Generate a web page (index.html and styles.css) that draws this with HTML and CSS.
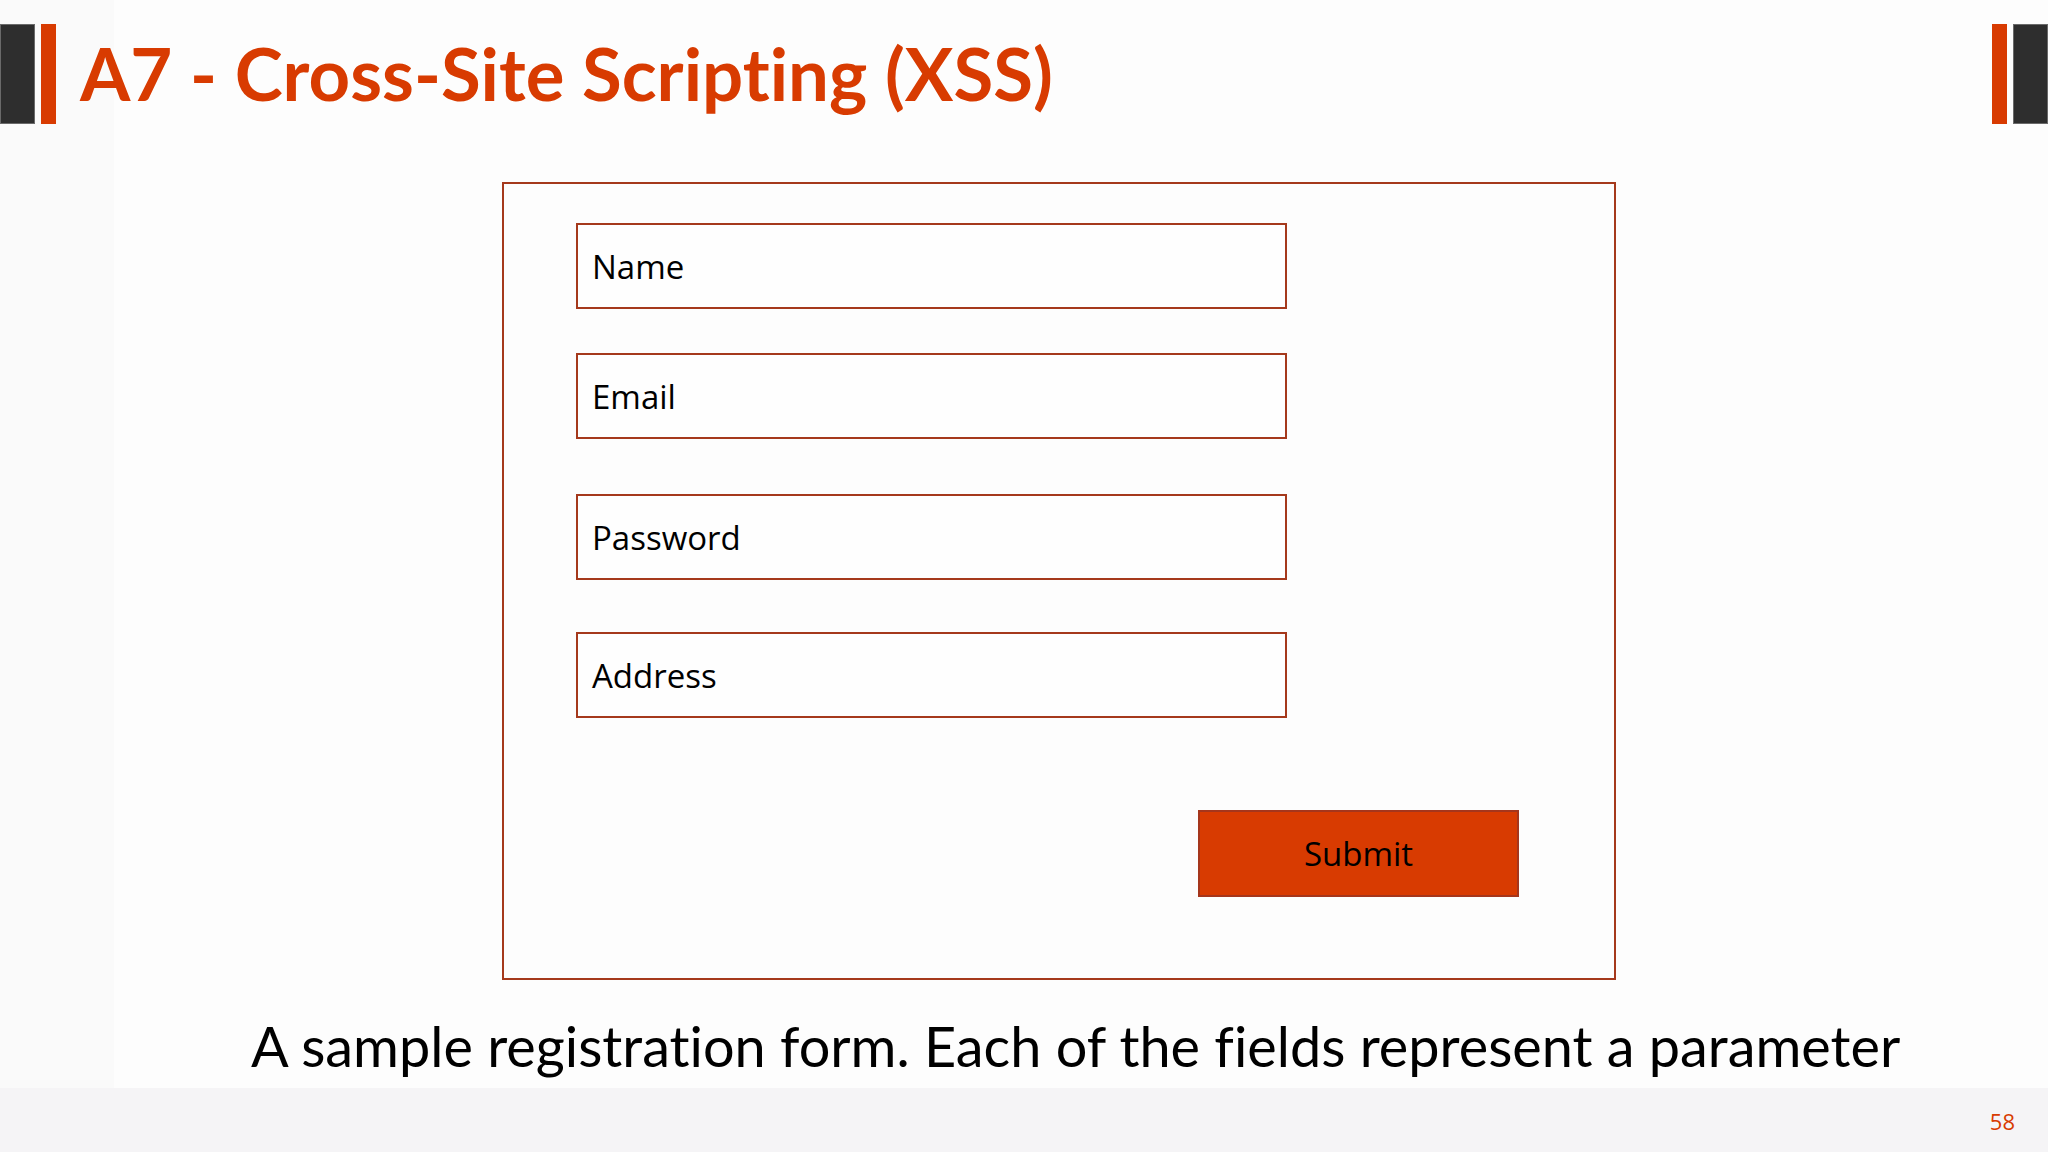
FILE: index.html
```html
<!DOCTYPE html>
<html lang="en">
<head>
<meta charset="utf-8">
<title>A7 - Cross-Site Scripting (XSS)</title>
<link rel="stylesheet" href="styles.css">
</head>
<body>
<div class="slide">
  <header class="head">
    <div class="bars">
      <span class="bar-dark"></span>
      <span class="bar-orange"></span>
    </div>
    <h1 class="title">A7 - Cross-Site Scripting (XSS)</h1>
    <div class="bars bars-right">
      <span class="bar-orange"></span>
      <span class="bar-dark"></span>
    </div>
  </header>

  <main class="content">
    <div class="form-box">
      <div class="field f1">Name</div>
      <div class="field f2">Email</div>
      <div class="field f3">Password</div>
      <div class="field f4">Address</div>
      <div class="submit">Submit</div>
    </div>
  </main>

  <p class="caption">A sample registration form. Each of the fields represent a parameter</p>

  <footer class="foot">
    <span class="page-num">58</span>
  </footer>
</div>
</body>
</html>
```

FILE: styles.css
```css
* { box-sizing: border-box; }

html, body {
  margin: 0;
  padding: 0;
}

body {
  width: 2048px;
  height: 1152px;
  background: #fdfdfd;
  font-family: "Open Sans", "Noto Sans", "Liberation Sans", sans-serif;
  color: #000;
  overflow: hidden;
}

.slide {
  width: 2048px;
  height: 1152px;
  display: flex;
  flex-direction: column;
  background: linear-gradient(to right, #fafafa 0, #fafafa 114px, #fdfdfd 114px);
}

/* header */
.head {
  height: 124px;
  padding-top: 24px;
  display: flex;
  align-items: flex-start;
}

.bars {
  display: flex;
  gap: 6px;
  flex: none;
}

.bars-right {
  margin-left: auto;
}

.bar-dark {
  display: block;
  width: 35px;
  height: 100px;
  background: #2e2e2e;
  box-shadow: 0 0 0 1px #6a6a6a inset;
}

.bar-orange {
  display: block;
  width: 15px;
  height: 100px;
  background: #d83b01;
}

.title {
  margin: 13px 0 0 24px;
  font-family: Lato, "Open Sans", sans-serif;
  font-size: 72.5px;
  line-height: 1;
  font-weight: 700;
  font-variant-ligatures: none;
  color: #d83b01;
  white-space: nowrap;
}

/* form */
.content {
  padding-top: 58px;
  padding-left: 502px;
  height: 856px;
}

.form-box {
  width: 1114px;
  height: 798px;
  border: 2px solid #a5391c;
  padding: 39px 0 0 72px;
  display: flex;
  flex-direction: column;
  align-items: flex-start;
}

.field {
  width: 711px;
  height: 86px;
  border: 2px solid #a5391c;
  background: #fefefe;
  display: flex;
  align-items: center;
  padding-left: 14px;
  font-size: 33px;
}

.f2 { margin-top: 44px; }
.f3 { margin-top: 55px; }
.f4 { margin-top: 52px; }

.submit {
  align-self: flex-end;
  margin: 92px 95px 0 0;
  width: 321px;
  height: 87px;
  background: #d83b01;
  border: 2px solid #a5361c;
  display: flex;
  align-items: center;
  justify-content: center;
  font-size: 33px;
}

/* caption */
.caption {
  margin: 0;
  height: 108px;
  padding: 38px 0 0 251px;
  font-family: Lato, "Open Sans", sans-serif;
  font-size: 55.8px;
  line-height: 1;
  font-variant-ligatures: none;
  white-space: nowrap;
}

/* footer */
.foot {
  height: 64px;
  background: #f5f4f6;
  display: flex;
  justify-content: flex-end;
  padding: 22px 33px 0 0;
}

.page-num {
  font-size: 22px;
  line-height: 1;
  color: #d83b01;
}
```
